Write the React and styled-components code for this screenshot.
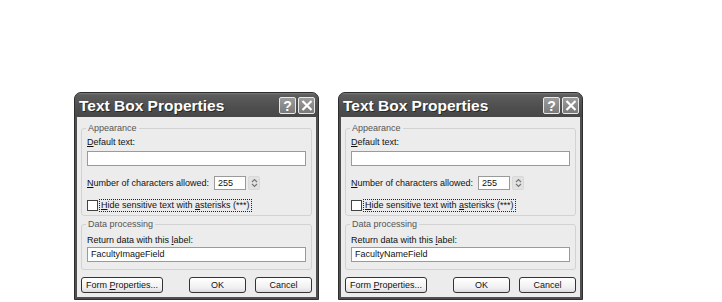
import styled, { createGlobalStyle } from "styled-components";

const GlobalStyle = createGlobalStyle`
	html, body {
		margin: 0;
		padding: 0;
		background: #ffffff;
	}
	body {
		font-family: "Liberation Sans", Arial, sans-serif;
	}
`;

const dialogs = [
	{ id: 1, label: 'FacultyImageField' },
	{ id: 2, label: 'FacultyNameField' },
];

const Dialog = ({ label }) => (
	<Window>
		<TitleBar>
			<Title>Text Box Properties</Title>
			<Caption>
				<CaptionButton>?</CaptionButton>
				<CaptionButton>
					<svg width="12" height="11" viewBox="0 0 12 11">
						<path d="M1.5 1 L10.5 10 M10.5 1 L1.5 10" stroke="#fff" strokeWidth="2.2" />
					</svg>
				</CaptionButton>
			</Caption>
		</TitleBar>
		<Client>
			<Group>
				<Legend>Appearance</Legend>
				<Label><u>D</u>efault text:</Label>
				<TextInput />
				<Row>
					<Label><u>N</u>umber of characters allowed:</Label>
					<Spin>
						<SmallInput>255</SmallInput>
						<Spinner>
							<svg width="7" height="10" viewBox="0 0 7 10">
								<path d="M1 4 L3.5 1.5 L6 4 M1 6 L3.5 8.5 L6 6" fill="none" stroke="#777" strokeWidth="1.2" />
							</svg>
						</Spinner>
					</Spin>
				</Row>
				<Check>
					<Box />
					<Focus><u>H</u>ide sensitive text with <u>a</u>sterisks (***)</Focus>
				</Check>
			</Group>
			<Group $second>
				<Legend>Data processing</Legend>
				<Label $tight>Return data with this <u>l</u>abel:</Label>
				<TextInput>{label}</TextInput>
			</Group>
			<Buttons>
				<Button $w={82}><span>Form <u>P</u>roperties...</span></Button>
				<Spacer />
				<Button $w={57}>OK</Button>
				<Button $w={57}>Cancel</Button>
			</Buttons>
		</Client>
	</Window>
);

const App = () => {
	return (
		<>
			<GlobalStyle />
			<Page>
				{dialogs.map(d => (
					<Dialog key={d.id} label={d.label} />
				))}
			</Page>
		</>
	);
};

const Page = styled.div`
	display: flex;
	gap: 19px;
	padding: 92px 0 0 74px;
	width: 722px;
	height: 302px;
	box-sizing: border-box;
`;

const Window = styled.div`
	width: 245px;
	height: 208px;
	box-sizing: border-box;
	display: flex;
	flex-direction: column;
	background: #4f4f4f;
	border: 1px solid #2e2e2e;
	border-radius: 7px 7px 0 0;
	overflow: hidden;
`;

const TitleBar = styled.div`
	height: 24px;
	flex: none;
	display: flex;
	align-items: center;
	justify-content: space-between;
	padding: 0 3px 0 4px;
	background: linear-gradient(#7a7a7a 0, #5c5c5c 2px, #4e4e4e 60%, #474747 100%);
`;

const Title = styled.span`
	color: #fff;
	font-weight: bold;
	font-size: 15.5px;
	text-shadow: 1px 1px 0 #2a2a2a;
	margin-top: 1px;
`;

const Caption = styled.div`
	display: flex;
	gap: 2px;
	margin-top: 1px;
`;

const CaptionButton = styled.div`
	width: 17px;
	height: 17px;
	box-sizing: border-box;
	border: 1px solid #e8e8e8;
	border-radius: 2px;
	background: linear-gradient(#9c9c9c, #7a7a7a);
	display: flex;
	align-items: center;
	justify-content: center;
	color: #fff;
	font-weight: bold;
	font-size: 14px;
`;

const Client = styled.div`
	flex: 1;
	margin: 0 2px 2px;
	background: #ececec;
	padding: 11px 4px 0;
	display: flex;
	flex-direction: column;
	font-size: 9px;
	color: #111;
`;

const Group = styled.div`
	position: relative;
	border: 1px solid #d2d2d2;
	border-radius: 3px;
	padding: ${props => props.$second ? '10px 5px 7px' : '8px 5px 3px'};
	margin-top: ${props => props.$second ? '8px' : '0'};
	display: flex;
	flex-direction: column;
`;

const Legend = styled.span`
	position: absolute;
	top: -6px;
	left: 4px;
	padding: 0 2px;
	background: #ececec;
	color: #555;
	font-size: 9px;
	line-height: 11px;
`;

const Label = styled.span`
	line-height: 11px;
	margin-bottom: ${props => props.$tight ? '1px' : '3px'};
	white-space: nowrap;
`;

const TextInput = styled.div`
	height: 15px;
	box-sizing: border-box;
	border: 1px solid #9a9a9a;
	background: #fff;
	padding: 0 3px;
	line-height: 13px;
`;

const Row = styled.div`
	display: flex;
	align-items: center;
	margin-top: 10px;
	gap: 5px;
	${Label} {
		margin: 0;
	}
`;

const Spin = styled.div`
	display: flex;
	align-items: center;
	gap: 2px;
`;

const SmallInput = styled.div`
	width: 32px;
	height: 14px;
	box-sizing: border-box;
	border: 1px solid #9a9a9a;
	background: #fff;
	padding: 0 3px;
	line-height: 12px;
`;

const Spinner = styled.div`
	width: 12px;
	height: 14px;
	box-sizing: border-box;
	border: 1px solid #d8d8d8;
	border-radius: 2px;
	background: #e2e2e2;
	display: flex;
	align-items: center;
	justify-content: center;
`;

const Check = styled.div`
	display: flex;
	align-items: center;
	gap: 1px;
	margin-top: 9px;
`;

const Box = styled.span`
	width: 11px;
	height: 11px;
	box-sizing: border-box;
	border: 1px solid #444;
	background: #fff;
`;

const Focus = styled.span`
	border: 1px dotted #222;
	padding: 0 1px;
	line-height: 11px;
`;

const Buttons = styled.div`
	display: flex;
	gap: 9px;
	margin-top: 7px;
`;

const Spacer = styled.span`
	flex: 1;
`;

const Button = styled.div`
	width: ${props => props.$w}px;
	height: 16px;
	box-sizing: border-box;
	border: 1px solid #333;
	border-radius: 3px;
	background: linear-gradient(#ffffff, #f0f0f0 70%, #dcdcdc);
	display: flex;
	align-items: center;
	justify-content: center;
	font-size: 9px;
	white-space: nowrap;
`;

export default App;
